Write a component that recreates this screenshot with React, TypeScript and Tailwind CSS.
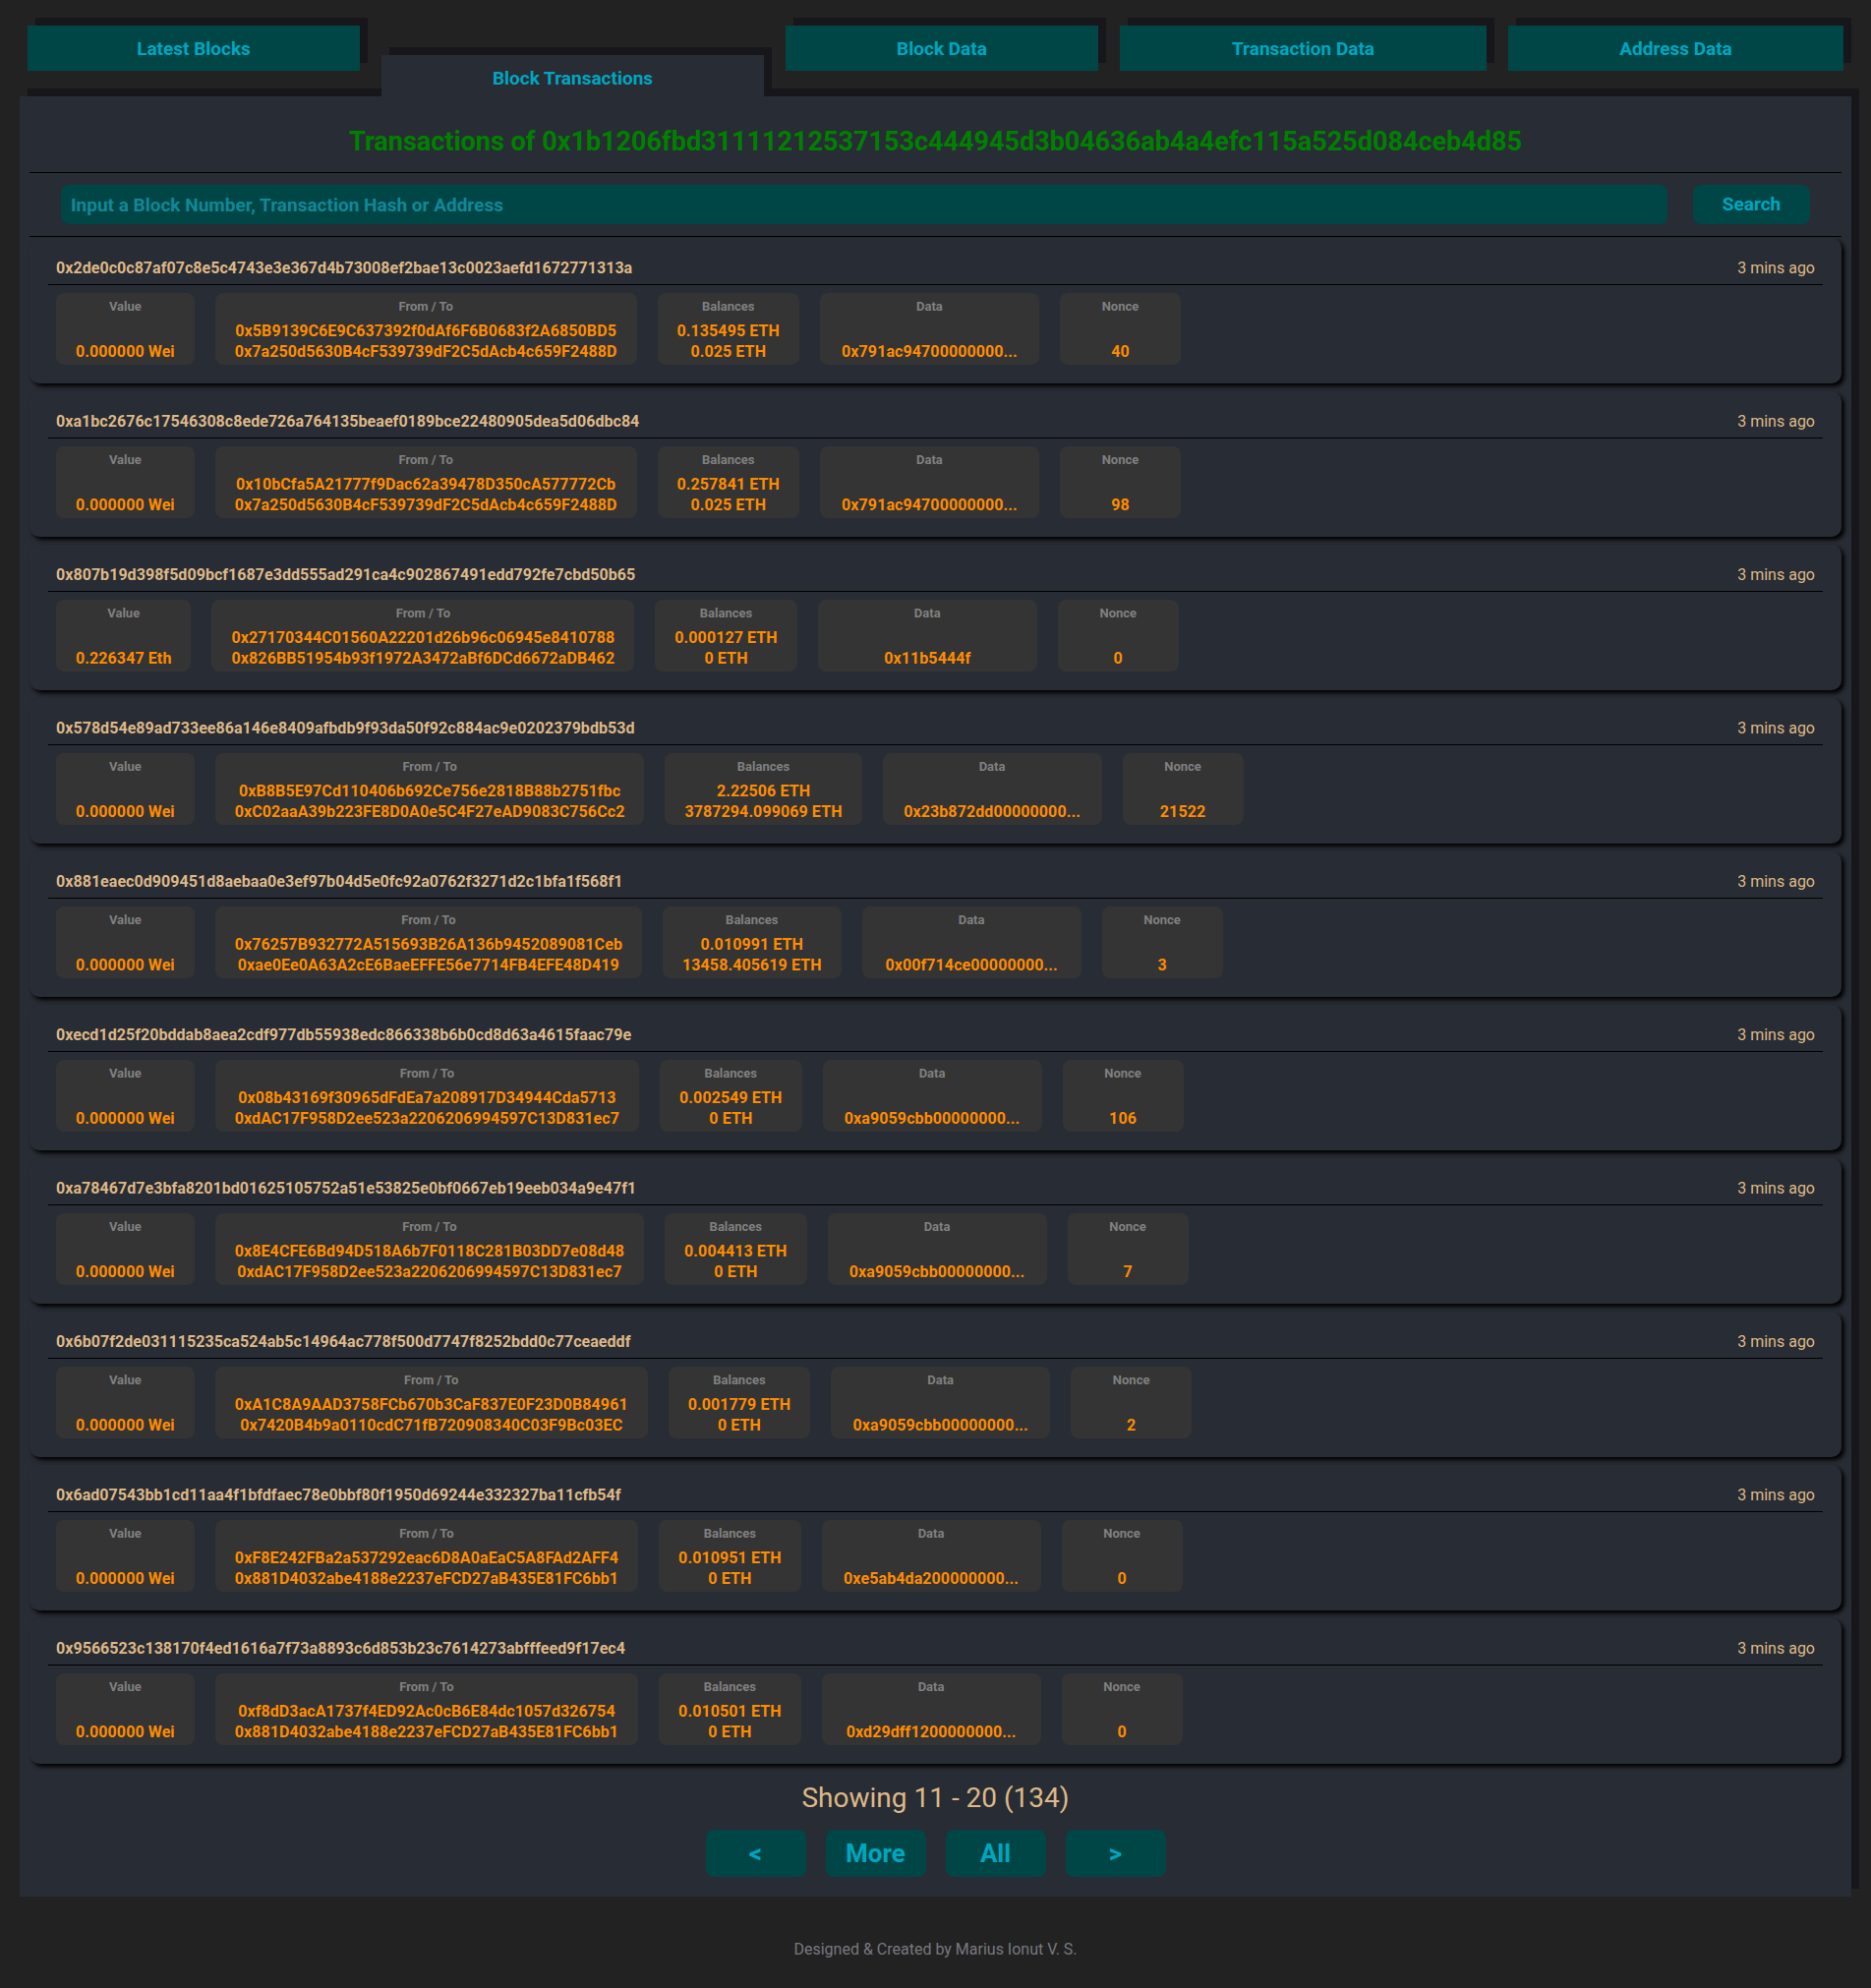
import React from 'react'

const TXS = [
  {
    hash: '0x2de0c0c87af07c8e5c4743e3e367d4b73008ef2bae13c0023aefd1672771313a',
    value: '0.000000 Wei',
    from: '0x5B9139C6E9C637392f0dAf6F6B0683f2A6850BD5',
    to: '0x7a250d5630B4cF539739dF2C5dAcb4c659F2488D',
    bal: ['0.135495 ETH', '0.025 ETH'],
    data: '0x791ac94700000000...',
    nonce: '40',
  },
  {
    hash: '0xa1bc2676c17546308c8ede726a764135beaef0189bce22480905dea5d06dbc84',
    value: '0.000000 Wei',
    from: '0x10bCfa5A21777f9Dac62a39478D350cA577772Cb',
    to: '0x7a250d5630B4cF539739dF2C5dAcb4c659F2488D',
    bal: ['0.257841 ETH', '0.025 ETH'],
    data: '0x791ac94700000000...',
    nonce: '98',
  },
  {
    hash: '0x807b19d398f5d09bcf1687e3dd555ad291ca4c902867491edd792fe7cbd50b65',
    value: '0.226347 Eth',
    from: '0x27170344C01560A22201d26b96c06945e8410788',
    to: '0x826BB51954b93f1972A3472aBf6DCd6672aDB462',
    bal: ['0.000127 ETH', '0 ETH'],
    data: '0x11b5444f',
    nonce: '0',
  },
  {
    hash: '0x578d54e89ad733ee86a146e8409afbdb9f93da50f92c884ac9e0202379bdb53d',
    value: '0.000000 Wei',
    from: '0xB8B5E97Cd110406b692Ce756e2818B88b2751fbc',
    to: '0xC02aaA39b223FE8D0A0e5C4F27eAD9083C756Cc2',
    bal: ['2.22506 ETH', '3787294.099069 ETH'],
    data: '0x23b872dd00000000...',
    nonce: '21522',
  },
  {
    hash: '0x881eaec0d909451d8aebaa0e3ef97b04d5e0fc92a0762f3271d2c1bfa1f568f1',
    value: '0.000000 Wei',
    from: '0x76257B932772A515693B26A136b9452089081Ceb',
    to: '0xae0Ee0A63A2cE6BaeEFFE56e7714FB4EFE48D419',
    bal: ['0.010991 ETH', '13458.405619 ETH'],
    data: '0x00f714ce00000000...',
    nonce: '3',
  },
  {
    hash: '0xecd1d25f20bddab8aea2cdf977db55938edc866338b6b0cd8d63a4615faac79e',
    value: '0.000000 Wei',
    from: '0x08b43169f30965dFdEa7a208917D34944Cda5713',
    to: '0xdAC17F958D2ee523a2206206994597C13D831ec7',
    bal: ['0.002549 ETH', '0 ETH'],
    data: '0xa9059cbb00000000...',
    nonce: '106',
  },
  {
    hash: '0xa78467d7e3bfa8201bd01625105752a51e53825e0bf0667eb19eeb034a9e47f1',
    value: '0.000000 Wei',
    from: '0x8E4CFE6Bd94D518A6b7F0118C281B03DD7e08d48',
    to: '0xdAC17F958D2ee523a2206206994597C13D831ec7',
    bal: ['0.004413 ETH', '0 ETH'],
    data: '0xa9059cbb00000000...',
    nonce: '7',
  },
  {
    hash: '0x6b07f2de031115235ca524ab5c14964ac778f500d7747f8252bdd0c77ceaeddf',
    value: '0.000000 Wei',
    from: '0xA1C8A9AAD3758FCb670b3CaF837E0F23D0B84961',
    to: '0x7420B4b9a0110cdC71fB720908340C03F9Bc03EC',
    bal: ['0.001779 ETH', '0 ETH'],
    data: '0xa9059cbb00000000...',
    nonce: '2',
  },
  {
    hash: '0x6ad07543bb1cd11aa4f1bfdfaec78e0bbf80f1950d69244e332327ba11cfb54f',
    value: '0.000000 Wei',
    from: '0xF8E242FBa2a537292eac6D8A0aEaC5A8FAd2AFF4',
    to: '0x881D4032abe4188e2237eFCD27aB435E81FC6bb1',
    bal: ['0.010951 ETH', '0 ETH'],
    data: '0xe5ab4da200000000...',
    nonce: '0',
  },
  {
    hash: '0x9566523c138170f4ed1616a7f73a8893c6d853b23c7614273abfffeed9f17ec4',
    value: '0.000000 Wei',
    from: '0xf8dD3acA1737f4ED92Ac0cB6E84dc1057d326754',
    to: '0x881D4032abe4188e2237eFCD27aB435E81FC6bb1',
    bal: ['0.010501 ETH', '0 ETH'],
    data: '0xd29dff1200000000...',
    nonce: '0',
  },
]

const TABS = [
  { name: 'Latest Blocks', w: 'w-[338px]' },
  { name: 'Block Transactions', w: 'w-[389px]', active: true },
  { name: 'Block Data', w: 'w-[318px]' },
  { name: 'Transaction Data', w: 'w-[373px]' },
  { name: 'Address Data', w: 'w-[341px]' },
]

function Box({ label, lines, className = '' }: { label: string; lines: string[]; className?: string }) {
  return (
    <div className={`flex h-[73px] flex-col justify-between rounded-lg bg-[#343434] px-5 pt-[5px] pb-[3px] text-center ${className}`}>
      <div className="text-[13px] font-bold leading-[18px] text-[#808080]">{label}</div>
      <div className="text-base font-bold leading-[21px] tracking-[0.1px] text-[#ff8c00]">
        {lines.map((l, i) => (
          <div key={i} className="whitespace-nowrap">{l}</div>
        ))}
      </div>
    </div>
  )
}

export default function App() {
  return (
    <div className="min-h-screen bg-[#222222] font-['Roboto',sans-serif]">
      {/* Tabs */}
      <div className="flex h-[98px] items-start gap-[22px] px-[28px]">
        {TABS.map((t) =>
          t.active ? (
            <div
              key={t.name}
              className={`relative z-10 mt-[56px] flex h-[46px] items-center justify-center bg-[#282c34] pt-[2px] text-[19px] font-bold text-[#00a6c0] shadow-[8px_-8px_0_#17171b] ${t.w}`}
            >
              {t.name}
            </div>
          ) : (
            <div
              key={t.name}
              className={`mt-[26px] flex h-[46px] items-center justify-center bg-[#004646] pt-[2px] text-[19px] font-bold text-[#00a6c0] shadow-[8px_-8px_0_#17171b] ${t.w}`}
            >
              {t.name}
            </div>
          )
        )}
      </div>

      {/* Panel */}
      <div className="mx-[20px] bg-[#282c34] px-[10px] pb-[20px] shadow-[8px_-8px_0_#17171b]">
        <div className="pt-[28px] text-center text-[27px] font-bold leading-[36px] text-[#008000]">
          Transactions of 0x1b1206fbd31111212537153c444945d3b04636ab4a4efc115a525d084ceb4d85
        </div>
        <div className="mt-[13px] h-px bg-black" />

        <div className="mt-[12px] flex gap-[26px] px-[32px]">
          <input
            placeholder="Input a Block Number, Transaction Hash or Address"
            className="h-[40px] flex-1 rounded-lg bg-[#004646] px-[10px] text-[19px] font-bold text-[#00a6c0] outline-none placeholder:text-[#118896]"
          />
          <button className="h-[40px] w-[119px] rounded-lg bg-[#004646] text-[19px] font-bold text-[#00a6c0]">
            Search
          </button>
        </div>
        <div className="mt-[12px] h-px bg-black" />

        {/* Transactions */}
        <div className="mt-[1px] flex flex-col gap-[8px]">
          {TXS.map((tx) => (
            <div key={tx.hash} className="rounded-[10px] bg-[#282c34] p-[19px] shadow-[3px_3px_4px_#000]">
              <div className="flex justify-between border-b border-black px-2 pb-[4px] text-base leading-[24px] text-[#deb887]">
                <span className="font-bold tracking-[0.05px]">{tx.hash}</span>
                <span>3 mins ago</span>
              </div>
              <div className="mt-[8px] flex gap-[21px] px-2">
                <Box label="Value" lines={[tx.value]} />
                <Box label="From / To" lines={[tx.from, tx.to]} />
                <Box label="Balances" lines={tx.bal} />
                <Box label="Data" lines={[tx.data]} className="w-[223px]" />
                <Box label="Nonce" lines={[tx.nonce]} className="w-[123px]" />
              </div>
            </div>
          ))}
        </div>

        {/* Pagination */}
        <div className="mt-[17px] text-center text-[28px] leading-[36px] text-[#deb887]">Showing 11 - 20 (134)</div>
        <div className="mt-[14px] flex justify-center gap-5">
          {['<', 'More', 'All', '>'].map((b) => (
            <button
              key={b}
              className="h-[48px] w-[102px] rounded-lg bg-[#004646] text-[26px] font-bold text-[#00a6c0]"
            >
              {b}
            </button>
          ))}
        </div>
      </div>

      <footer className="pt-[42px] pb-[27px] text-center text-base leading-[24px] text-[#78787f]">
        Designed &amp; Created by Marius Ionut V. S.
      </footer>
    </div>
  )
}
